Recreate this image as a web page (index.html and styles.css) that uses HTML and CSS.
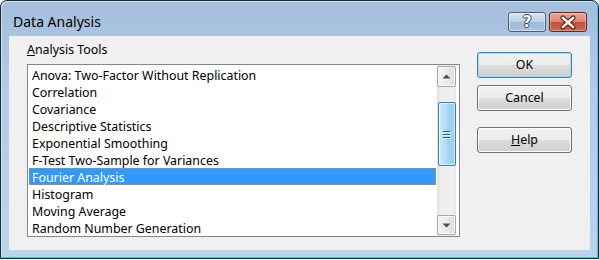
FILE: index.html
```html
<!DOCTYPE html>
<html>
<head>
<meta charset="utf-8">
<title>Data Analysis</title>
<link rel="stylesheet" href="styles.css">
</head>
<body>
<div class="window">
  <div class="titlebar">
    <span class="title">Data Analysis</span>
    <div class="caption-buttons">
      <div class="cap-btn help-btn"><span class="qmark">?</span></div>
      <div class="cap-btn close-btn">
        <svg width="38" height="20" viewBox="0 0 38 20">
          <path d="M13.5 5.5 L24.5 15.5 M24.5 5.5 L13.5 15.5" stroke="#5a1a10" stroke-width="5" stroke-linecap="round" fill="none"/>
          <path d="M13.5 5.5 L24.5 15.5 M24.5 5.5 L13.5 15.5" stroke="#ffffff" stroke-width="2.6" stroke-linecap="round" fill="none"/>
        </svg>
      </div>
    </div>
  </div>
  <div class="client">
    <div class="left">
      <div class="label"><u>A</u>nalysis Tools</div>
      <div class="listbox">
        <div class="list">
          <div class="row">Anova: Two-Factor Without Replication</div>
          <div class="row">Correlation</div>
          <div class="row">Covariance</div>
          <div class="row">Descriptive Statistics</div>
          <div class="row">Exponential Smoothing</div>
          <div class="row">F-Test Two-Sample for Variances</div>
          <div class="row selected">Fourier Analysis</div>
          <div class="row">Histogram</div>
          <div class="row">Moving Average</div>
          <div class="row">Random Number Generation</div>
        </div>
        <div class="scrollbar">
          <div class="sb-btn up">
            <svg width="9" height="5" viewBox="0 0 9 5"><path d="M0.5 4.5 L4.5 0.5 L8.5 4.5 Z" fill="#4a4a4a"/></svg>
          </div>
          <div class="sb-track">
            <div class="thumb">
              <svg width="8" height="9" viewBox="0 0 8 9">
                <path d="M0 1.5 H7 M0 4.5 H7 M0 7.5 H7" stroke="#2f5f88" stroke-width="1"/>
                <path d="M1 2.5 H8 M1 5.5 H8 M1 8.5 H8" stroke="#e6f4fc" stroke-width="1"/>
              </svg>
            </div>
          </div>
          <div class="sb-btn down">
            <svg width="9" height="5" viewBox="0 0 9 5"><path d="M0.5 0.5 L4.5 4.5 L8.5 0.5 Z" fill="#4a4a4a"/></svg>
          </div>
        </div>
      </div>
    </div>
    <div class="buttons">
      <div class="btn default">OK</div>
      <div class="btn">Cancel</div>
      <div class="btn help"><u>H</u>elp</div>
    </div>
  </div>
</div>
</body>
</html>
```

FILE: styles.css
```css
* { box-sizing: border-box; }

body {
  margin: 0;
  background: #ffffff;
  font-family: "Noto Sans", "Open Sans", sans-serif;
  font-size: 12.4px;
  color: #000;
}

.window {
  width: 599px;
  height: 259px;
  border: 1px solid #1c2736;
  border-radius: 7px 7px 0 0;
  background: linear-gradient(180deg, #a4bedc 0%, #b3cbe6 35%, #bcd3ec 100%);
  box-shadow: inset 0 -1px 0 #3ccbe4, inset -1px 0 0 #3ccbe4, inset 1px 1px 0 #d6e4f3;
  display: flex;
  flex-direction: column;
  overflow: hidden;
}

.titlebar {
  height: 35px;
  display: flex;
  justify-content: space-between;
  align-items: flex-start;
  padding-left: 12px;
}

.title {
  font-size: 14px;
  line-height: 20px;
  padding-top: 11px;
  color: #000;
}

.caption-buttons {
  display: flex;
  gap: 3px;
  margin-top: 11px;
  margin-right: 11px;
}

.cap-btn {
  width: 38px;
  height: 20px;
  border: 1px solid #4d5d72;
  border-radius: 3px;
  display: flex;
  align-items: center;
  justify-content: center;
  overflow: hidden;
}

.help-btn {
  background: linear-gradient(180deg, #d8e5f2 0%, #bed1e6 48%, #9fb9d6 52%, #a9c4e0 100%);
  box-shadow: inset 0 0 0 1px rgba(255,255,255,0.45);
}

.qmark {
  font-family: "DejaVu Sans", sans-serif;
  font-weight: bold;
  font-size: 15px;
  line-height: 18px;
  color: #fff;
  text-shadow: 1px 0 0 #33455c, -1px 0 0 #33455c, 0 1px 0 #33455c, 0 -1px 0 #33455c;
}

.close-btn {
  border-color: #5b2a24;
  background: linear-gradient(180deg, #eaaa9c 0%, #d98472 48%, #c4503a 52%, #cc6a52 100%);
  box-shadow: inset 0 0 0 1px rgba(255,255,255,0.3);
}

.client {
  flex: 1;
  margin: 0 8px 8px 8px;
  background: #f0f0f0;
  display: flex;
  padding: 5px 18px 0 18px;
  gap: 17px;
}

.left {
  display: flex;
  flex-direction: column;
}

.label {
  line-height: 16px;
  height: 16px;
  padding-top: 1px;
  margin-bottom: 7px;
}

.listbox {
  width: 433px;
  height: 173px;
  border: 1px solid #828790;
  background: #fff;
  display: flex;
  padding-right: 3px;
}

.list {
  width: 409px;
  padding: 1px;
}

.row {
  height: 17px;
  line-height: 17px;
  padding-left: 3px;
  padding-top: 1px;
  white-space: nowrap;
}

.row.selected {
  background: #3399ff;
  color: #fff;
  outline: 1px dotted #d08a3a;
  outline-offset: -1px;
}

.scrollbar {
  width: 19px;
  display: flex;
  flex-direction: column;
  padding: 1px 0;
  background: linear-gradient(90deg, #e2e2e2 0%, #ededed 20%, #f0f0f0 80%, #e6e6e6 100%);
}

.sb-btn {
  display: flex;
  align-items: center;
  justify-content: center;
  border: 1px solid #a7a7a7;
  border-radius: 2px;
  background: linear-gradient(90deg, #f2f2f2 0%, #ebebeb 50%, #dcdcdc 100%);
  box-shadow: inset 0 0 0 1px #fafafa;
}

.sb-btn.up { height: 21px; }
.sb-btn.down { height: 20px; }

.sb-track {
  flex: 1;
  padding: 15px 0 0 1px;
}

.thumb {
  width: 18px;
  height: 64px;
  border: 1px solid #3c7fb1;
  border-radius: 2px;
  background: linear-gradient(90deg, #cdeaf9 0%, #b2dcf6 45%, #a4d4f3 55%, #9bcef0 100%);
  box-shadow: inset 0 0 0 1px rgba(255,255,255,0.6);
  display: flex;
  align-items: center;
  justify-content: center;
}

.buttons {
  display: flex;
  flex-direction: column;
  padding-top: 11px;
}

.btn {
  width: 95px;
  height: 26px;
  border: 1px solid #707070;
  border-radius: 3px;
  background: linear-gradient(180deg, #f2f2f2 0%, #ebebeb 50%, #dddddd 50%, #cfcfcf 100%);
  box-shadow: inset 0 0 0 1px #fcfcfc;
  display: flex;
  align-items: center;
  justify-content: center;
  line-height: 16px;
  margin-bottom: 7px;
}

.btn.default {
  border-color: #3c7fb1;
  box-shadow: inset 0 0 0 1px #9fdcf8;
}

.btn.help {
  margin-top: 9px;
}
```
